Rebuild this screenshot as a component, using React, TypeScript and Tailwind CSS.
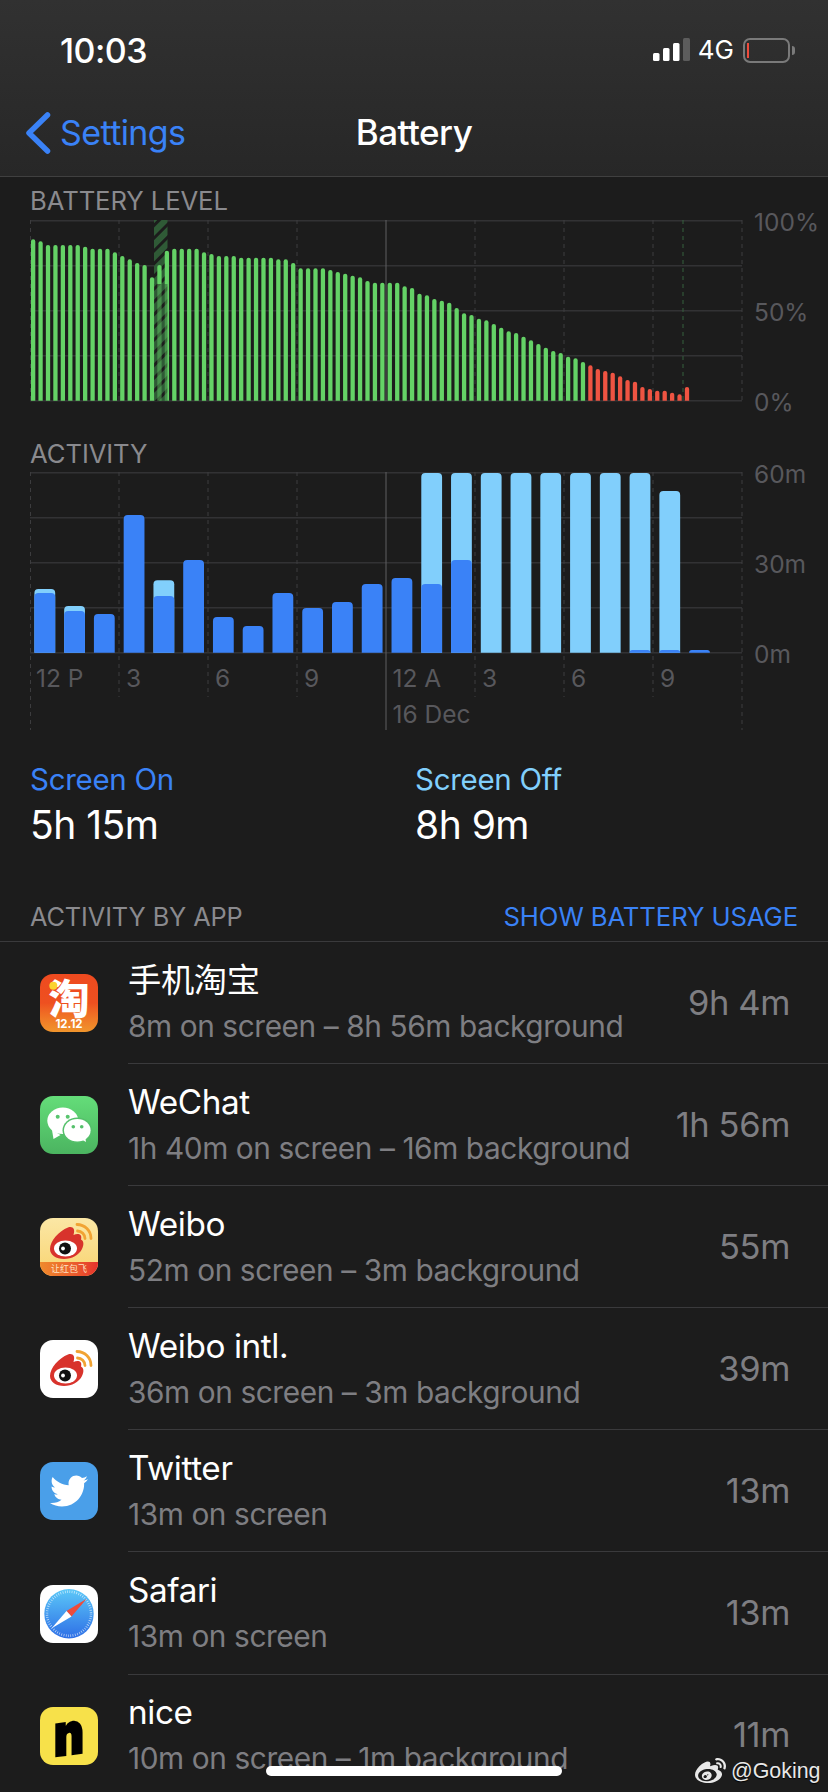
import { FaTwitter, FaWeibo } from "react-icons/fa";

// bar tops as read off the reference (3x crop coordinates)
const batteryTops = [
  178, 184, 195, 195, 195, 195, 195, 200, 206, 206, 206, 217, 228, 238, 249, 255, 292, 255, 212, 206, 206, 206, 206,
  217, 222, 228, 228, 228, 233, 233, 233, 233, 233, 238, 238, 249, 265, 265, 265, 265, 270, 276, 281, 287, 292, 303,
  308, 308, 308, 308, 319, 324, 341, 346, 357, 362, 368, 384, 400, 405, 416, 421, 432, 443, 454, 459, 470, 481, 492,
  503, 513, 519, 530, 535, 546, 556, 567, 573, 578, 589, 600, 605, 621, 627, 632, 632, 638, 643, 621,
];

const activityBars: { light?: number; dark?: number }[] = [
  { light: 477, dark: 489 },
  { light: 528, dark: 543 },
  { dark: 552 },
  { dark: 255 },
  { light: 451, dark: 498 },
  { dark: 390 },
  { dark: 561 },
  { dark: 588 },
  { dark: 489 },
  { dark: 534 },
  { dark: 516 },
  { dark: 462 },
  { dark: 444 },
  { light: 129, dark: 462 },
  { light: 129, dark: 390 },
  { light: 129 },
  { light: 129 },
  { light: 129 },
  { light: 129 },
  { light: 129 },
  { light: 129, dark: 660 },
  { light: 183, dark: 660 },
  { dark: 660 },
];

const hourLines = [0.5, 89, 178, 267, 356, 445, 534, 623, 712];

function topBar(x: number, y: number, w: number, bottom: number, r: number) {
  const rr = Math.min(r, (bottom - y) / 1);
  return `M${x} ${bottom}V${y + rr}Q${x} ${y} ${x + rr} ${y}H${x + w - rr}Q${x + w} ${y} ${x + w} ${y + rr}V${bottom}Z`;
}

function BatteryChart() {
  return (
    <svg width="713" height="182" className="block shrink-0">
      <defs>
        <pattern id="hatch" width="9" height="9" patternUnits="userSpaceOnUse" patternTransform="rotate(-45)">
          <rect width="9" height="9" fill="#2f5a36" />
          <rect width="9" height="3" fill="#1c1c1c" />
        </pattern>
      </defs>
      {[0.75, 45.75, 90.75, 135.75, 180.75].map((y) => (
        <line key={y} x1="0" x2="712" y1={y} y2={y} stroke="#323234" strokeWidth="1.5" />
      ))}
      {hourLines.map((x) =>
        x === 356 ? null : <line key={x} x1={x} x2={x} y1="0" y2="181" stroke="#3c3c3e" strokeDasharray="4 4" />
      )}
      <line x1="356" x2="356" y1="0" y2="181" stroke="#5f5f61" />
      <line x1="653" x2="653" y1="0" y2="181" stroke="#35603d" strokeDasharray="4 4" />
      <rect x="124" y="0" width="13.5" height="181" fill="url(#hatch)" />
      {batteryTops.map((t, i) => (
        <path
          key={i}
          d={topBar(1 + i * 7.43, t / 3 - 40, 4.3, 180.7, 2.1)}
          fill={i >= 75 ? "#ef5442" : "#64d266"}
        />
      ))}
      <rect x="124" y="64" width="13.5" height="117" fill="url(#hatch)" opacity="0.55" />
    </svg>
  );
}

function ActivityChart() {
  return (
    <svg width="713" height="259" className="block shrink-0 font-['Inter',sans-serif]">
      {[0.75, 45.75, 90.75, 135.75, 180.75].map((y) => (
        <line key={y} x1="0" x2="712" y1={y} y2={y} stroke="#323234" strokeWidth="1.5" />
      ))}
      {hourLines.map((x) =>
        x === 356 ? null : (
          <line
            key={x}
            x1={x}
            x2={x}
            y1="0"
            y2={x === 0.5 || x === 712 ? 258 : 225}
            stroke="#3c3c3e"
            strokeDasharray="4 4"
          />
        )
      )}
      <line x1="356" x2="356" y1="0" y2="258" stroke="#5f5f61" />
      {activityBars.map((b, i) => {
        const x = 4.4 + i * 29.76;
        return (
          <g key={i}>
            {b.light && <path d={topBar(x, b.light / 3 - 42, 20.8, 180.7, 4)} fill="#81cffc" />}
            {b.dark && <path d={topBar(x, b.dark / 3 - 42, 20.8, 180.7, 4)} fill="#3a82f7" />}
          </g>
        );
      })}
      {[
        ["12 P", 6],
        ["3", 96],
        ["6", 185],
        ["9", 274],
        ["12 A", 362.5],
        ["3", 452],
        ["6", 541],
        ["9", 630],
      ].map(([t, x]) => (
        <text key={`${t}${x}`} x={x} y="214.5" fill="#58585c" fontSize="24.5">
          {t}
        </text>
      ))}
      <text x="362.5" y="250.5" fill="#58585c" fontSize="24.5">
        16 Dec
      </text>
    </svg>
  );
}

function AxisLabels({ labels }: { labels: string[] }) {
  return (
    <div className="mt-[2px] ml-[11px] flex h-[180px] flex-col justify-between text-[24.5px] text-[#58585c]">
      {labels.map((l) => (
        <div key={l} className="flex h-0 items-center">
          {l}
        </div>
      ))}
    </div>
  );
}

function IconBox({ className, children }: { className: string; children: React.ReactNode }) {
  return <div className={`h-[58px] w-[58px] shrink-0 rounded-[13px] ${className}`}>{children}</div>;
}

function TaobaoIcon() {
  return (
    <IconBox className="bg-gradient-to-b from-[#ee4a1f] via-[#ee5020] to-[#f0952c]">
      <svg viewBox="0 0 58 58" className="h-full w-full overflow-visible">
        <text x="29" y="40" textAnchor="middle" fill="#fff" fontSize="41" fontWeight="900" fontFamily="'Noto Sans CJK SC',sans-serif">
          淘
        </text>
        <circle cx="13.3" cy="11.7" r="4" fill="#fbd32f" />
        <text x="29" y="54" textAnchor="middle" fill="#fff" fontSize="11.5" fontWeight="700" fontFamily="Inter,sans-serif">
          12.12
        </text>
      </svg>
    </IconBox>
  );
}

function WeChatIcon() {
  return (
    <IconBox className="overflow-hidden bg-gradient-to-b from-[#64dd79] to-[#4bb460]">
      <svg viewBox="0 0 58 58" className="h-full w-full">
        <path d="M12 34l1.5 9 7-4z" fill="#fff" />
        <ellipse cx="22.8" cy="24.8" rx="15.5" ry="13.2" fill="#fff" />
        <circle cx="17.7" cy="20.7" r="2" fill="#58c56e" />
        <circle cx="27.7" cy="20.7" r="2" fill="#58c56e" />
        <ellipse cx="37.3" cy="34.3" rx="14.8" ry="12.8" fill="#55c06b" />
        <ellipse cx="37.3" cy="34.3" rx="13.3" ry="11.3" fill="#fff" />
        <path d="M41 43l5 3-1-6z" fill="#fff" />
        <circle cx="33.3" cy="30.7" r="1.8" fill="#55c06b" />
        <circle cx="41.7" cy="30.7" r="1.8" fill="#55c06b" />
      </svg>
    </IconBox>
  );
}

function WeiboMark() {
  return (
    <>
      <path
        d="M10 31C10 23 19 13 28 9.5C33 8 35.5 11 33.5 17C38 15 42.5 16 41 21.5C44 23 44 27 42 31C39 37 32 41 24 41C16 41 10 37 10 31Z"
        fill="#d8332c"
      />
      <ellipse cx="25.5" cy="30.5" rx="11.5" ry="8" fill="#fff" />
      <circle cx="25" cy="30.5" r="6" fill="#111" />
      <circle cx="23" cy="30.5" r="1.9" fill="#fff" />
      <path d="M37 6.5a14 14 0 0 1 14 14" fill="none" stroke="#f1a333" strokeWidth="2.8" strokeLinecap="round" />
      <path d="M37.5 13a7.5 7.5 0 0 1 7.5 7.5" fill="none" stroke="#f1a333" strokeWidth="2.8" strokeLinecap="round" />
    </>
  );
}

function WeiboIcon() {
  return (
    <IconBox className="flex flex-col overflow-hidden bg-gradient-to-b from-[#fbe7a5] to-[#f9d46f]">
      <svg viewBox="0 0 58 44" className="block h-[44px] w-[58px] shrink-0">
        <WeiboMark />
      </svg>
      <div className="flex h-[14px] items-center justify-center bg-gradient-to-r from-[#ef8a2c] to-[#e5302c] text-[9px] leading-[14px] text-[#fde3c4] font-['Noto_Sans_CJK_SC',sans-serif]">
        让红包飞
      </div>
    </IconBox>
  );
}

function WeiboIntlIcon() {
  return (
    <IconBox className="overflow-hidden bg-white">
      <svg viewBox="0 0 58 58" className="h-full w-full">
        <g transform="translate(0 5)">
          <WeiboMark />
        </g>
      </svg>
    </IconBox>
  );
}

function TwitterIcon() {
  return (
    <IconBox className="flex items-center justify-center bg-[#4a9fe9]">
      <FaTwitter className="text-white" size={38} />
    </IconBox>
  );
}

function SafariIcon() {
  return (
    <IconBox className="overflow-hidden bg-white">
      <svg viewBox="0 0 58 58" className="h-full w-full">
        <defs>
          <linearGradient id="safari" x1="0" y1="0" x2="0" y2="1">
            <stop offset="0" stopColor="#5cc8f8" />
            <stop offset="1" stopColor="#2e6fe6" />
          </linearGradient>
        </defs>
        <circle cx="29" cy="28.7" r="24.7" fill="url(#safari)" />
        <circle cx="29" cy="28.7" r="22" fill="none" stroke="#fff" strokeOpacity="0.7" strokeWidth="2.5" strokeDasharray="0.7 1.6" />
        <path d="M46.7 13.7L26.5 26L31.5 31.5Z" fill="#ee4b3b" />
        <path d="M11.7 43.3L26.5 26L31.5 31.5Z" fill="#fff" />
      </svg>
    </IconBox>
  );
}

function NiceIcon() {
  return (
    <IconBox className="flex items-center justify-center bg-[#f7e14a]">
      <span className="-mt-[6px] -skew-y-6 scale-y-125 text-[46px] leading-[46px] font-black text-black [-webkit-text-stroke:2px_#000]">
        n
      </span>
    </IconBox>
  );
}

const apps = [
  { name: "手机淘宝", sub: "8m on screen – 8h 56m background", value: "9h 4m", icon: <TaobaoIcon /> },
  { name: "WeChat", sub: "1h 40m on screen – 16m background", value: "1h 56m", icon: <WeChatIcon /> },
  { name: "Weibo", sub: "52m on screen – 3m background", value: "55m", icon: <WeiboIcon /> },
  { name: "Weibo intl.", sub: "36m on screen – 3m background", value: "39m", icon: <WeiboIntlIcon /> },
  { name: "Twitter", sub: "13m on screen", value: "13m", icon: <TwitterIcon /> },
  { name: "Safari", sub: "13m on screen", value: "13m", icon: <SafariIcon /> },
  { name: "nice", sub: "10m on screen – 1m background", value: "11m", icon: <NiceIcon /> },
];

function StatusIcons() {
  return (
    <div className="flex items-center">
      <svg width="37" height="24" className="block">
        <rect x="0" y="15" width="6.5" height="8" rx="1.5" fill="#fff" />
        <rect x="10" y="10" width="6.5" height="13" rx="1.5" fill="#fff" />
        <rect x="20" y="5" width="6.5" height="18" rx="1.5" fill="#fff" />
        <rect x="30" y="0" width="7" height="23" rx="1.5" fill="#5c5c5c" />
      </svg>
      <span className="ml-[8px] text-[26px] leading-none text-white">4G</span>
      <div className="ml-[9px] flex h-[25px] w-[47px] items-center rounded-[7px] border-2 border-[#7a7a7a] pl-[2px]">
        <div className="h-[15px] w-[2px] bg-[#ef4b3c]" />
      </div>
      <div className="ml-[2px] h-[9px] w-[3px] rounded-r-[3px] bg-[#7a7a7a]" />
    </div>
  );
}

export default function App() {
  return (
    <div className="relative h-[1792px] w-[828px] overflow-hidden bg-[#1c1c1c] font-['Inter','Noto_Sans_CJK_SC',sans-serif]">
      <div className="h-[177px] border-b border-[#404040] bg-gradient-to-b from-[#313131] to-[#272727]">
        <div className="flex h-[100px] items-center justify-between pr-[33px] pl-[60px]">
          <span className="text-[34px] font-medium tracking-[-0.5px] text-white">10:03</span>
          <StatusIcons />
        </div>
        <div className="relative -mt-[1px] flex h-[66px] items-center justify-center">
          <div className="absolute left-[25px] flex items-center text-[#3a82f7]">
            <svg width="26" height="42" viewBox="0 0 26 42" className="mt-[1px] block">
              <path d="M22.5 3L4 21L22.5 39" fill="none" stroke="#3a82f7" strokeWidth="5.5" strokeLinecap="round" strokeLinejoin="round" />
            </svg>
            <span className="ml-[9px] text-[34px] tracking-[-0.6px]">Settings</span>
          </div>
          <span className="text-[35px] font-medium tracking-[-0.5px] text-white">Battery</span>
        </div>
      </div>

      <div className="pt-[7px]">
        <div className="h-[36px] pl-[30px] text-[25.7px] leading-[34px] tracking-[-0.1px] text-[#8a8a8e]">BATTERY LEVEL</div>
        <div className="flex pl-[30px]">
          <BatteryChart />
          <AxisLabels labels={["100%", "50%", "0%"]} />
        </div>

        <div className="mt-[34px] h-[36px] pl-[30px] text-[25.7px] leading-[36px] tracking-[-0.1px] text-[#8a8a8e]">ACTIVITY</div>
        <div className="flex pl-[30px]">
          <ActivityChart />
          <AxisLabels labels={["60m", "30m", "0m"]} />
        </div>
      </div>

      <div className="mt-[30px] flex pl-[30px]">
        <div className="w-[385px]">
          <div className="text-[29.5px] leading-[36px] tracking-[-0.3px] text-[#3a82f7]">Screen On</div>
          <div className="mt-[6px] text-[39px] leading-[44px] tracking-[-0.5px] text-white">5h 15m</div>
        </div>
        <div>
          <div className="text-[29.5px] leading-[36px] tracking-[-0.3px] text-[#81cffc]">Screen Off</div>
          <div className="mt-[6px] text-[39px] leading-[44px] tracking-[-0.5px] text-white">8h 9m</div>
        </div>
      </div>

      <div className="mt-[50px] flex h-[40px] items-center justify-between pr-[30px] pl-[30px] tracking-[-0.1px]">
        <span className="text-[25.3px] text-[#8a8a8e]">ACTIVITY BY APP</span>
        <span className="text-[25.7px] text-[#3a82f7]">SHOW BATTERY USAGE</span>
      </div>

      <div className="mt-[4px] border-t border-[#3a3a3c]">
        {apps.map((a) => (
          <div key={a.name} className="flex h-[122.1px] shrink-0 items-center pl-[40px]">
            {a.icon}
            <div className="ml-[30px] flex h-full min-w-0 flex-1 items-center border-b border-[#3a3a3c] pr-[38px]">
              <div className="min-w-0 flex-1 pb-[2px]">
                <div className="text-[33.3px] leading-[40px] tracking-[-0.4px] text-white">{a.name}</div>
                <div className="mt-[8px] text-[29.8px] leading-[36px] tracking-[-0.4px] text-[#7e7e82]">{a.sub}</div>
              </div>
              <div className="text-[34.5px] tracking-[-0.4px] text-[#7e7e82]">{a.value}</div>
            </div>
          </div>
        ))}
      </div>

      <div className="absolute top-[1766px] left-[266px] h-[10px] w-[296px] rounded-full bg-white" />
      <div className="absolute top-[1755px] left-[695px] flex items-center text-[#e8e8e8] font-['Liberation_Sans',sans-serif]">
        <FaWeibo size={31} />
        <span className="ml-[5px] text-[21.4px] [text-shadow:0_1px_1px_#000]">@Goking</span>
      </div>
    </div>
  );
}
